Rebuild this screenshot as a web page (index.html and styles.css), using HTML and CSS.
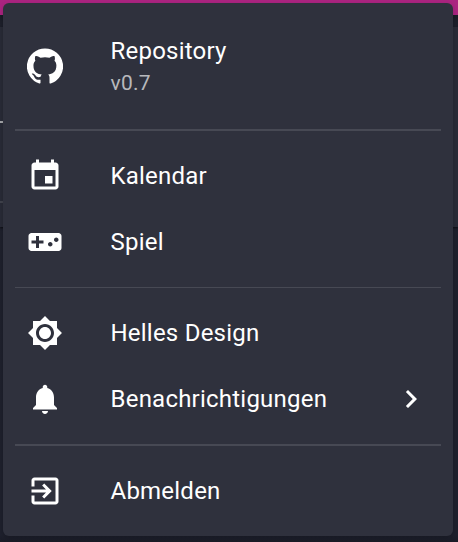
FILE: index.html
```html
<!DOCTYPE html>
<html lang="de">
<head>
<meta charset="utf-8">
<title>Menü</title>
<link rel="stylesheet" href="styles.css">
</head>
<body>
<div class="backdrop">
  <div class="appbar"></div>
  <div class="panel"></div>
</div>
<nav class="menu">
  <a class="item item-tall">
    <svg class="icon" viewBox="0 0 24 24"><path d="M12 .3a12 12 0 0 0-3.8 23.4c.6.1.8-.3.8-.6v-2c-3.3.7-4-1.6-4-1.6-.6-1.4-1.4-1.8-1.4-1.8-1-.7.1-.7.1-.7 1.2 0 1.9 1.2 1.9 1.2 1 1.8 2.8 1.3 3.5 1 0-.8.4-1.3.7-1.6-2.7-.3-5.5-1.3-5.5-6 0-1.2.5-2.3 1.3-3.1-.2-.4-.6-1.6 0-3.2 0 0 1-.3 3.4 1.2a11.5 11.5 0 0 1 6 0c2.3-1.5 3.3-1.2 3.3-1.2.6 1.6.2 2.8 0 3.2.9.8 1.3 1.9 1.3 3.2 0 4.6-2.8 5.6-5.5 5.9.5.4.9 1 .9 2.2v3.3c0 .3.1.7.8.6A12 12 0 0 0 12 .3"/></svg>
    <span class="text"><span class="label">Repository</span><span class="version">v0.7</span></span>
  </a>
  <hr class="divider">
  <a class="item">
    <svg class="icon" viewBox="0 0 24 24"><path d="M17 12h-5v5h5v-5zM16 1v2H8V1H6v2H5c-1.11 0-1.99.9-1.99 2L3 19c0 1.1.89 2 2 2h14c1.1 0 2-.9 2-2V5c0-1.1-.9-2-2-2h-1V1h-2zm3 18H5V8h14v11z"/></svg>
    <span class="label">Kalendar</span>
  </a>
  <a class="item">
    <svg class="icon" viewBox="0 0 24 24"><path d="M21 6H3c-1.1 0-2 .9-2 2v8c0 1.1.9 2 2 2h18c1.1 0 2-.9 2-2V8c0-1.1-.9-2-2-2zm-10 7H8v3H6v-3H3v-2h3V8h2v3h3v2zm4.5 2c-.83 0-1.5-.67-1.5-1.5s.67-1.5 1.5-1.5 1.5.67 1.5 1.5-.67 1.5-1.5 1.5zm4-3c-.83 0-1.5-.67-1.5-1.5S18.67 9 19.5 9s1.5.67 1.5 1.5-.67 1.5-1.5 1.5z"/></svg>
    <span class="label">Spiel</span>
  </a>
  <hr class="divider divider-thin">
  <a class="item">
    <svg class="icon" viewBox="0 0 24 24"><path d="M20 8.69V4h-4.69L12 .69 8.69 4H4v4.69L.69 12 4 15.31V20h4.69L12 23.31 15.31 20H20v-4.69L23.31 12 20 8.69zM12 18c-3.31 0-6-2.69-6-6s2.69-6 6-6 6 2.69 6 6-2.69 6-6 6zm0-10c-2.21 0-4 1.79-4 4s1.79 4 4 4 4-1.79 4-4-1.79-4-4-4z"/></svg>
    <span class="label">Helles Design</span>
  </a>
  <a class="item">
    <svg class="icon" viewBox="0 0 24 24"><path d="M12 22c1.1 0 2-.9 2-2h-4c0 1.1.89 2 2 2zm6-6v-5c0-3.07-1.64-5.64-4.5-6.32V4c0-.83-.67-1.5-1.5-1.5s-1.5.67-1.5 1.5v.68C7.63 5.36 6 7.92 6 11v5l-2 2v1h16v-1l-2-2z"/></svg>
    <span class="label">Benachrichtigungen</span>
    <svg class="icon chevron" viewBox="0 0 24 24"><path d="M10 6L8.59 7.41 13.17 12l-4.58 4.59L10 18l6-6z"/></svg>
  </a>
  <hr class="divider">
  <a class="item">
    <svg class="icon" viewBox="0 0 24 24"><path d="M10.09 15.59L11.5 17l5-5-5-5-1.41 1.41L12.67 11H3v2h9.67l-2.58 2.59zM19 3H5c-1.11 0-2 .9-2 2v4h2V5h14v14H5v-4H3v4c0 1.1.89 2 2 2h14c1.1 0 2-.9 2-2V5c0-1.1-.9-2-2-2z"/></svg>
    <span class="label">Abmelden</span>
  </a>
</nav>
</body>
</html>
```
FILE: styles.css
```css
* {
  box-sizing: border-box;
}

body {
  margin: 0;
  height: 542px;
  overflow: hidden;
  padding: 3px 5px 6px 3px;
  background: #1d1f2b;
  font-family: Roboto, "Liberation Sans", sans-serif;
  color: #fff;
}

/* Page surface visible around the edges of the open menu */
.backdrop {
  position: absolute;
  inset: 0;
  background: linear-gradient(#1e202c, #1e202d 535px, #1a1c27);
}

.appbar {
  height: 15px;
  margin-bottom: 12px;
  background: #ab2480;
  box-shadow: 0 3px 6px rgba(0, 0, 0, 0.3);
}

.panel {
  height: 200px;
  background:
    linear-gradient(#a5a6aa, #a5a6aa) 0 94px / 3px 2px no-repeat,
    linear-gradient(#41434d, #41434d) 0 174px / 3px 2px no-repeat,
    #292b37;
  box-shadow: 0 1px 2px rgba(0, 0, 0, 0.6);
}

.menu {
  position: relative;
  height: 533px;
  padding: 12px 0;
  border-radius: 6px;
  background: #2f313d;
  box-shadow: 0 2px 5px rgba(0, 0, 0, 0.2);
}

.item {
  display: flex;
  align-items: center;
  height: 66px;
  padding: 0 24px;
}

.item-tall {
  height: 102px;
}

.icon {
  flex: none;
  width: 36px;
  height: 36px;
  margin-right: 47.5px;
  fill: #fff;
}

.chevron {
  margin: 0 0 0 auto;
}

.text {
  display: flex;
  flex-direction: column;
}

.label {
  font-size: 24px;
  line-height: 36px;
  letter-spacing: 0.00938em;
}

.version {
  padding-bottom: 2px;
  font-size: 21px;
  line-height: 28px;
  letter-spacing: 0.01071em;
  color: #b7b8bc;
}

.divider {
  height: 2px;
  margin: 12px;
  border: 0;
  background: #474954;
}

.divider-thin {
  height: 1px;
}
```
